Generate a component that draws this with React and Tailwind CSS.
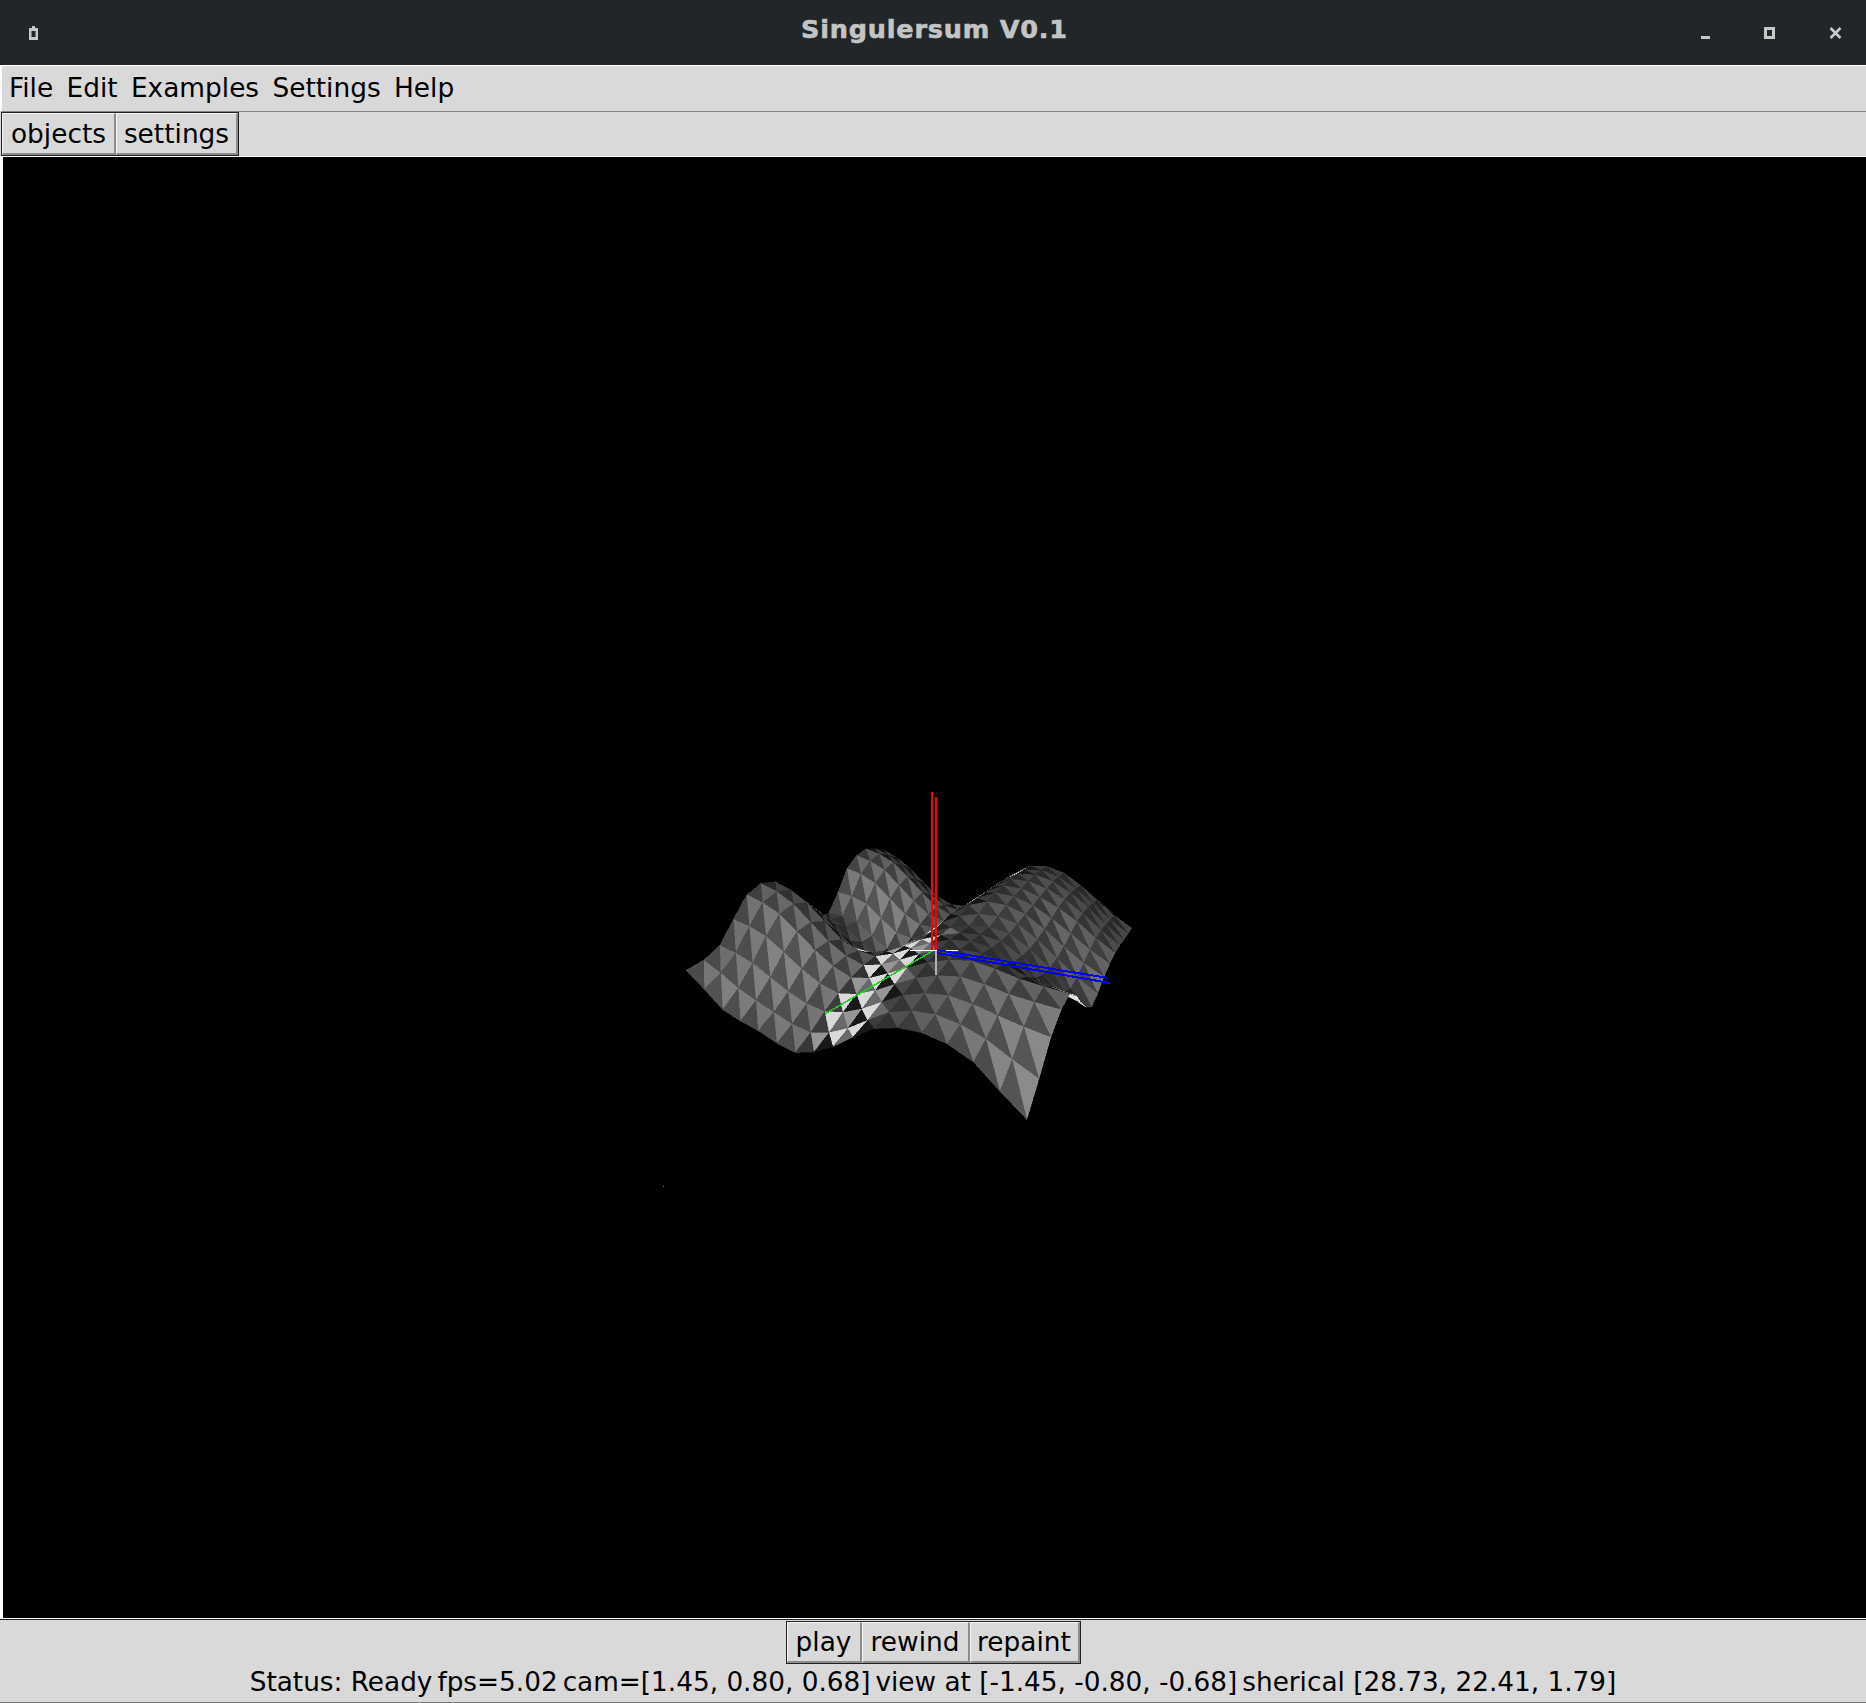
import React from "react";

const font = "font-['DejaVu_Sans',sans-serif]";

// camera from the status line, z is up
const CAM = [1.45, 0.8, 0.68];
const FOCAL = 580;
const ORIGIN = [932, 950];
const len = Math.hypot(...CAM);
const d = CAM.map((c) => -c / len);
const rl = Math.hypot(d[1], d[0]);
const r = [d[1] / rl, -d[0] / rl, 0];
const u = [r[1] * d[2], -r[0] * d[2], r[0] * d[1] - r[1] * d[0]];
const dot = (a, b) => a[0] * b[0] + a[1] * b[1] + a[2] * b[2];

const project = (p) => {
  const q = [p[0] - CAM[0], p[1] - CAM[1], p[2] - CAM[2]];
  const zc = dot(q, d);
  return [ORIGIN[0] + (FOCAL * dot(q, r)) / zc, ORIGIN[1] - (FOCAL * dot(q, u)) / zc, zc];
};

// surface heights read off the picture, rows x = .5 to -.5, columns y = -.5 to .5
const HEIGHTS = [
  [0.02, -0.07, -0.1, -0.13, -0.075, 0.01, 0.035, 0, -0.1],
  [0.05, 0.02, -0.04, -0.07, -0.03, 0.04, 0.07, 0.05, 0.03],
  [0.17, 0.13, 0.04, -0.02, 0.02, 0.08, 0.11, 0.09, 0.08],
  [0.18, 0.13, 0.03, 0, 0.05, 0.1, 0.1, 0.04, 0],
  [0.05, 0.02, -0.07, -0.02, 0.06, 0.1, 0.1, 0.02, -0.07],
  [0, -0.01, -0.09, -0.05, 0.08, 0.14, 0.12, 0.04, -0.03],
  [0.14, 0.1, 0, -0.03, 0.08, 0.16, 0.14, 0.08, 0],
  [0.19, 0.15, 0.05, -0.02, 0.08, 0.17, 0.16, 0.09, 0],
  [0.16, 0.1, 0, -0.02, 0.08, 0.17, 0.16, 0.08, 0],
];

const catmull = (p0, p1, p2, p3, t) =>
  0.5 * (2 * p1 + (p2 - p0) * t + (2 * p0 - 5 * p1 + 4 * p2 - p3) * t * t + (3 * p1 - p0 - 3 * p2 + p3) * t * t * t);

const clampIdx = (i) => Math.max(0, Math.min(8, i));

const height = (x, y) => {
  const gx = (0.5 - x) * 8;
  const gy = (y + 0.5) * 8;
  const ix = Math.min(7, Math.floor(gx));
  const iy = Math.min(7, Math.floor(gy));
  const row = (i) =>
    catmull(
      HEIGHTS[clampIdx(i)][clampIdx(iy - 1)],
      HEIGHTS[clampIdx(i)][clampIdx(iy)],
      HEIGHTS[clampIdx(i)][clampIdx(iy + 1)],
      HEIGHTS[clampIdx(i)][clampIdx(iy + 2)],
      gy - iy
    );
  return catmull(row(ix - 1), row(ix), row(ix + 1), row(ix + 2), gx - ix);
};

const shade = (nv, right, mid, index) => {
  // bright band that runs up from the front edge to the axes
  const inBand = mid[0] > 0.03 && mid[1] > -0.1 && mid[1] < 0.09;
  if (inBand) {
    if (right) return index % 3 === 0 ? 150 : 218;
    return index % 2 === 0 ? 24 : 105;
  }
  if (nv < 0.08) return right ? 225 : 18;
  if (nv < 0.25) return right ? 58 : 22;
  return right ? 30 + 110 * nv : 18 + 72 * nv;
};

const buildMesh = () => {
  const N = 16;
  const pt = (i, j) => {
    const x = -0.5 + i / N;
    const y = -0.5 + j / N;
    return [x, y, height(x, y)];
  };
  const tris = [];
  for (let i = 0; i < N; i++) {
    for (let j = 0; j < N; j++) {
      const a = pt(i, j);
      const b = pt(i + 1, j);
      const c = pt(i + 1, j + 1);
      const e = pt(i, j + 1);
      tris.push({ v: [a, b, c], right: false, index: i + j }, { v: [a, c, e], right: true, index: i + j });
    }
  }
  return tris
    .map((t) => {
      const [a, b, c] = t.v;
      const e1 = [b[0] - a[0], b[1] - a[1], b[2] - a[2]];
      const e2 = [c[0] - a[0], c[1] - a[1], c[2] - a[2]];
      let n = [e1[1] * e2[2] - e1[2] * e2[1], e1[2] * e2[0] - e1[0] * e2[2], e1[0] * e2[1] - e1[1] * e2[0]];
      const nl = Math.hypot(...n);
      n = n.map((v) => v / nl);
      const mid = [(a[0] + b[0] + c[0]) / 3, (a[1] + b[1] + c[1]) / 3, (a[2] + b[2] + c[2]) / 3];
      const view = [CAM[0] - mid[0], CAM[1] - mid[1], CAM[2] - mid[2]];
      const vl = Math.hypot(...view);
      const nv = dot(n, view) / vl;
      const g = Math.round(shade(nv, t.right, mid, t.index));
      const pts = t.v.map(project);
      return {
        depth: pts[0][2] + pts[1][2] + pts[2][2],
        points: pts.map((p) => `${p[0].toFixed(1)},${p[1].toFixed(1)}`).join(" "),
        fill: `rgb(${g},${g},${g})`,
      };
    })
    .sort((p, q) => q.depth - p.depth);
};

const mesh = buildMesh();

const ToolButton = ({ label, className }) => (
  <button className={`h-full text-center text-black pt-[1px] border border-t-[#f4f4f4] border-l-[#f4f4f4] border-b-2 border-r-2 border-b-[#8c8c8c] border-r-[#8c8c8c] ${className}`}>
    {label}
  </button>
);

export default function App() {
  return (
    <div className={`w-[1866px] h-[1703px] flex flex-col overflow-hidden bg-[#d9d9d9] text-[26.4px] leading-none text-black ${font}`}>
      {/* window title */}
      <div className="h-[65px] shrink-0 bg-[#212629] grid grid-cols-[1fr_auto_1fr] items-center pl-[29px] pr-[24px]">
        <svg width="9" height="14" viewBox="0 0 9 14" className="mt-[1px]">
          <path d="M3 0h3v2h3v12H0V2h3z M2.5 5v6h4V5z" fill="#c8c8c8" fillRule="evenodd" />
        </svg>
        <div className="font-bold text-[25.5px] text-[#c4c4c4] tracking-[0.8px] mb-[5px] mr-[2px] [-webkit-text-stroke:0.6px_#c4c4c4]">Singulersum V0.1</div>
        <div className="flex items-center justify-end gap-[54px] mt-[1px]">
          <svg width="9" height="3" viewBox="0 0 9 3" className="mt-[9px]"><rect width="9" height="3" fill="#c8c8c8" /></svg>
          <svg width="11" height="12" viewBox="0 0 11 12"><path d="M0 0h11v12H0z M3 3v6h5V3z" fill="#c8c8c8" fillRule="evenodd" /></svg>
          <svg width="13" height="12" viewBox="0 0 13 12"><path d="M1.5 1l10 10M11.5 1l-10 10" stroke="#c8c8c8" strokeWidth="2.6" /></svg>
        </div>
      </div>

      {/* menu bar */}
      <div className="h-[47px] shrink-0 border-t border-t-white border-b border-b-[#858585] border-l-2 border-l-white flex items-center gap-[13.3px] pl-[7px] pb-[1px]">
        <span>File</span>
        <span>Edit</span>
        <span>Examples</span>
        <span>Settings</span>
        <span>Help</span>
      </div>

      {/* tabs */}
      <div className="h-[45px] shrink-0 flex items-start pl-[1px] border-b border-b-white">
        <div className="h-[44px] w-[238px] border border-[#222] flex">
          <ToolButton label="objects" className="w-[114px]" />
          <ToolButton label="settings" className="flex-1" />
        </div>
      </div>

      {/* viewport */}
      <div className="h-[1462px] shrink-0 border-b border-b-white border-l-[3px] border-l-white">
        <svg viewBox="3 157 1863 1461" shapeRendering="crispEdges" className="block w-[1863px] h-[1461px] bg-black">
          {mesh.map((t, i) => (
            <polygon key={i} points={t.points} fill={t.fill} stroke={t.fill} strokeWidth="0.4" />
          ))}
          <rect x="663" y="1186" width="1" height="1" fill="#888" />
          <line x1="935.5" y1="950" x2="935.5" y2="975" stroke="#b0b0b0" strokeWidth="2" />
          <line x1="910" y1="950.5" x2="958" y2="950.5" stroke="#fff" strokeWidth="1.2" />
          <line x1="932.5" y1="951" x2="825" y2="1014" stroke="#1fd11f" strokeWidth="1.5" />
          <line x1="932" y1="792" x2="932" y2="950" stroke="#ff0000" strokeWidth="2" />
          <line x1="936" y1="797" x2="936" y2="950" stroke="#ff0000" strokeWidth="2.4" />
          <line x1="937" y1="950" x2="1108" y2="978" stroke="#0000ff" strokeWidth="2" />
          <line x1="937" y1="953" x2="1110" y2="983" stroke="#0000ff" strokeWidth="2" />
        </svg>
      </div>

      {/* bottom controls */}
      <div className="flex-1 border-t border-t-[#222] border-b border-b-[#777] flex flex-col items-center">
        <div className="mt-[1px] h-[43px] w-[295px] border border-[#222] flex shrink-0">
          <ToolButton label="play" className="w-[75px]" />
          <ToolButton label="rewind" className="w-[108px]" />
          <ToolButton label="repaint" className="flex-1" />
        </div>
        <div className="flex gap-[5px] mt-[5px] whitespace-nowrap text-[26.3px]">
          <span>Status: Ready</span>
          <span>fps=5.02</span>
          <span>cam=[1.45, 0.80, 0.68]</span>
          <span>view at [-1.45, -0.80, -0.68]</span>
          <span>sherical [28.73, 22.41, 1.79]</span>
        </div>
      </div>
    </div>
  );
}
